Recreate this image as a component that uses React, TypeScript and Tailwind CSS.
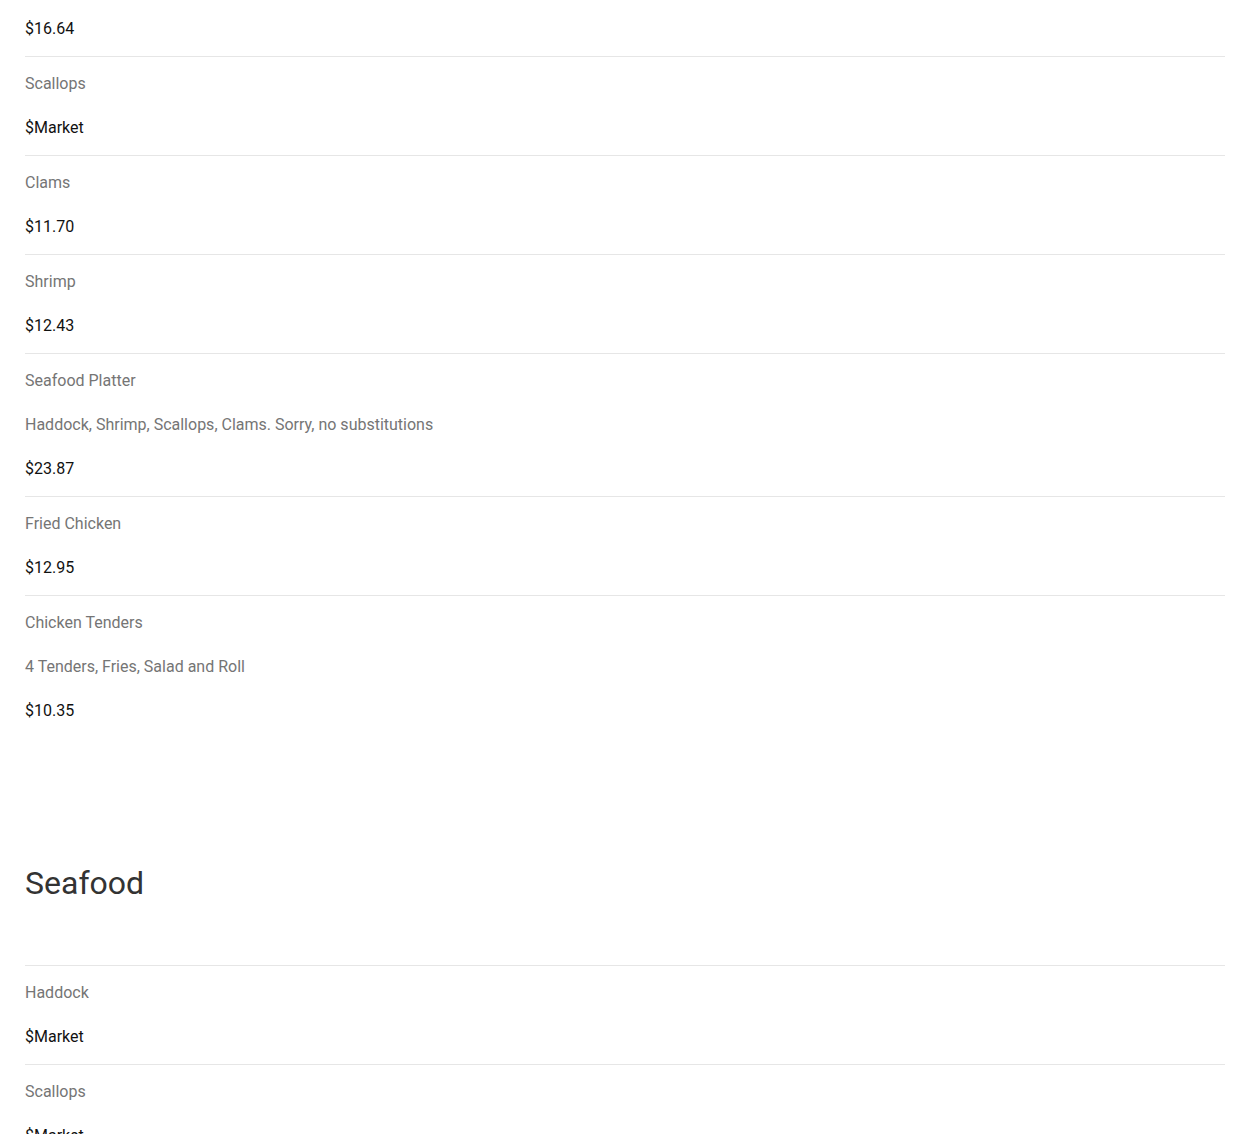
type MenuItem = {
  name: string;
  description?: string;
  price: string;
};

const earlierItems: MenuItem[] = [
  { name: "Scallops", price: "$Market" },
  { name: "Clams", price: "$11.70" },
  { name: "Shrimp", price: "$12.43" },
  {
    name: "Seafood Platter",
    description: "Haddock, Shrimp, Scallops, Clams. Sorry, no substitutions",
    price: "$23.87",
  },
  { name: "Fried Chicken", price: "$12.95" },
  {
    name: "Chicken Tenders",
    description: "4 Tenders, Fries, Salad and Roll",
    price: "$10.35",
  },
];

const seafoodItems: MenuItem[] = [
  { name: "Haddock", price: "$Market" },
  { name: "Scallops", price: "$Market" },
];

const Item = ({ item }: { item: MenuItem }) => (
  <div className="border-t border-[#e6e6e6] pt-[15px] pb-[15px] flex flex-col gap-[20px]">
    <p className="text-[#757575] leading-[24px]">{item.name}</p>
    {item.description && (
      <p className="text-[#757575] leading-[24px]">{item.description}</p>
    )}
    <p className="text-[#111111] leading-[24px]">{item.price}</p>
  </div>
);

const App = () => {
  return (
    <div
      className="bg-white min-h-screen px-[25px] text-base"
      style={{ fontFamily: "Roboto, 'Noto Sans', sans-serif" }}
    >
      <div className="w-[1200px]">
        <div className="pt-[17px] pb-[15px]">
          <p className="text-[#111111] leading-[24px]">$16.64</p>
        </div>
        {earlierItems.map((item, i) => (
          <Item key={i} item={item} />
        ))}

        <h2 className="mt-[126px] mb-[63px] text-[32px] leading-[38px] text-[#333333] font-normal">
          Seafood
        </h2>
        {seafoodItems.map((item, i) => (
          <Item key={i} item={item} />
        ))}
      </div>
    </div>
  );
};

export default App;
